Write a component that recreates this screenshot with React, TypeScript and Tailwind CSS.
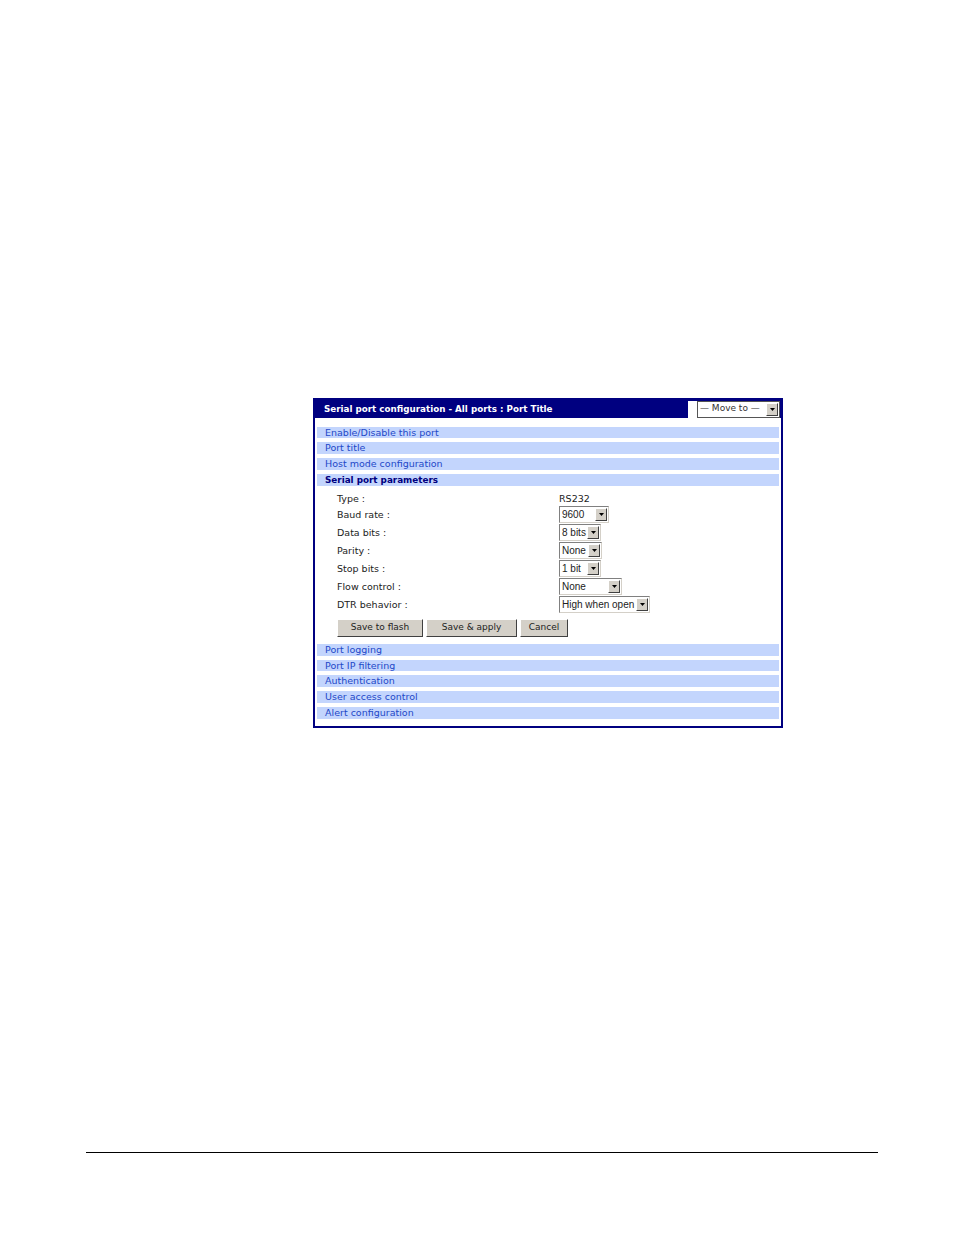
const verdana = 'font-["DejaVu_Sans",sans-serif] text-[9.5px]'

const Arrow = () => (
  <div className="flex h-[13px] w-[12px] shrink-0 items-center justify-center border border-t-white border-l-white border-r-[#404040] border-b-[#404040] bg-[#d4d0c8]">
    <svg width="5" height="3" viewBox="0 0 5 3">
      <path d="M0 0h5L2.500 3z" fill="#000" />
    </svg>
  </div>
)

const Select = ({ value, width }: { value: string; width: number }) => (
  <div
    className="flex h-[17px] items-center justify-between border border-t-[#808080] border-l-[#808080] border-r-[#d4d0c8] border-b-[#d4d0c8] bg-white pr-px pl-[2px] font-['Liberation_Sans',sans-serif] text-[10px] leading-none text-[#222]"
    style={{ width }}
  >
    <span className="whitespace-nowrap">{value}</span>
    <Arrow />
  </div>
)

const Bar = ({ label, active, short }: { label: string; active?: boolean; short?: boolean }) => (
  <div
    className={`bg-[#c3d5fd] pl-2 whitespace-nowrap ${short ? 'h-[11px] leading-[11px]' : 'h-3 leading-3'} ${
      active
        ? 'font-["DejaVu_Sans",sans-serif] text-[8.8px] font-bold text-[#000080]'
        : `${verdana} text-[#1e48c8]`
    }`}
  >
    {label}
  </div>
)

const Btn = ({ label, width }: { label: string; width: number }) => (
  <div
    className="flex h-[18px] items-center justify-center border border-t-white border-l-white border-r-[#404040] border-b-[#404040] bg-[#d4d0c8] font-['DejaVu_Sans',sans-serif] text-[9px] text-[#222]"
    style={{ width }}
  >
    {label}
  </div>
)

const fields = [
  { label: 'Baud rate :', value: '9600', width: 50 },
  { label: 'Data bits :', value: '8 bits', width: 42 },
  { label: 'Parity :', value: 'None', width: 43 },
  { label: 'Stop bits :', value: '1 bit', width: 42 },
  { label: 'Flow control :', value: 'None', width: 63 },
  { label: 'DTR behavior :', value: 'High when open', width: 91 },
]

export default function App() {
  return (
    <div className="flex h-[1235px] w-[954px] flex-col bg-white pt-[398px]">
      {/* Config panel */}
      <div className="ml-[313px] h-[330px] w-[470px] border-2 border-[#000080] bg-white">
        <div className="flex h-[18px] items-center justify-between bg-[#000080] pl-[9px]">
          <span className="pt-[2px] font-['DejaVu_Sans',sans-serif] text-[8.75px] font-bold whitespace-nowrap text-white">
            Serial port configuration - All ports : Port Title
          </span>
          <div className="mr-px flex h-[17px] w-[92px] justify-end bg-white">
            <div className="flex w-[83px] items-center justify-between border border-[#555] pr-px pl-[2px] font-['DejaVu_Sans',sans-serif] text-[9px] text-[#333]">
              <span className="whitespace-nowrap">— Move to —</span>
              <Arrow />
            </div>
          </div>
        </div>

        <div className="mx-[2px] mt-[9px] flex flex-col gap-1">
          <Bar label="Enable/Disable this port" short />
          <Bar label="Port title" />
          <Bar label="Host mode configuration" />
          <Bar label="Serial port parameters" active />
        </div>

        <div className={`mt-[4px] ml-[22px] flex h-4 w-[300px] items-center pt-[2px] text-[#222] ${verdana}`}>
          <span className="w-[222px]">Type :</span>
          <span>RS232</span>
        </div>

        <div className="ml-[22px] flex flex-col gap-px">
          {fields.map(f => (
            <div key={f.label} className="flex items-center">
              <span className={`w-[222px] pt-px text-[#222] ${verdana}`}>{f.label}</span>
              <Select value={f.value} width={f.width} />
            </div>
          ))}
        </div>

        <div className="mt-[6px] ml-[22px] flex gap-[3px]">
          <Btn label="Save to flash" width={86} />
          <Btn label="Save & apply" width={91} />
          <Btn label="Cancel" width={48} />
        </div>

        <div className="mx-[2px] mt-[7px] flex flex-col gap-1">
          <Bar label="Port logging" />
          <Bar label="Port IP filtering" short />
          <Bar label="Authentication" />
          <Bar label="User access control" />
          <Bar label="Alert configuration" />
        </div>
      </div>

      {/* Footer rule */}
      <div className="mt-[424px] ml-[86px] h-px w-[792px] bg-black" />
    </div>
  )
}
